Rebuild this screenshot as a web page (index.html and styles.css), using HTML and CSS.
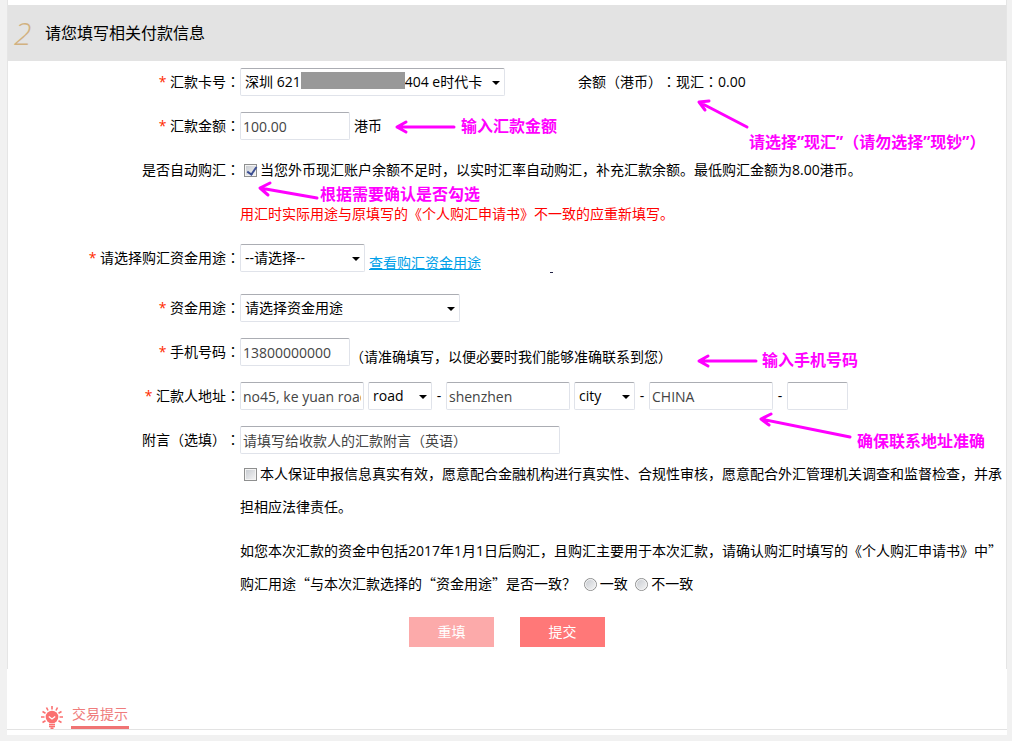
FILE: index.html
```html
<!DOCTYPE html>
<html lang="zh-CN">
<head>
<meta charset="utf-8">
<title>请您填写相关付款信息</title>
<link rel="stylesheet" href="styles.css">
</head>
<body>
<main class="page">
  <section class="panel">
    <header class="step">
      <span class="step-number">2</span>
      <h1 class="step-title">请您填写相关付款信息</h1>
    </header>
    <form class="form">
      <div class="row">
        <label class="label" for="card"><span class="star">*</span> 汇款卡号<span class="colon" lang="zh-TW">：</span></label>
        <div class="field">
          <span class="select card"><select id="card"><option>深圳 621&#8199;&#8199;&#8199;&#8199;&#8199;&#8199;&#8199;&#8199;&#8199;&#8199;&#8199;&#8199;&#8199;404 e时代卡</option></select><span class="mask"></span></span>
          <span class="balance">余额（港币）<span class="colon" lang="zh-TW">：</span>现汇<span class="colon" lang="zh-TW">：</span>0.00</span>
        </div>
      </div>
      <div class="row">
        <label class="label" for="amount"><span class="star">*</span> 汇款金额<span class="colon" lang="zh-TW">：</span></label>
        <div class="field"><input class="text w-short" id="amount" type="text" value="100.00"><span>港币</span></div>
      </div>
      <div class="row">
        <label class="label" for="auto">是否自动购汇<span class="colon" lang="zh-TW">：</span></label>
        <div class="field"><label><input class="check" id="auto" type="checkbox" checked>当您外币现汇账户余额不足时，以实时汇率自动购汇，补充汇款余额。最低购汇金额为8.00港币。</label></div>
      </div>
      <div class="row">
        <span></span>
        <div class="field warning">用汇时实际用途与原填写的《个人购汇申请书》不一致的应重新填写。</div>
      </div>
      <div class="row">
        <label class="label" for="fx-use"><span class="star">*</span> 请选择购汇资金用途<span class="colon" lang="zh-TW">：</span></label>
        <div class="field"><span class="select w-use"><select id="fx-use"><option>--请选择--</option></select></span><a class="link low" href="#">查看购汇资金用途</a></div>
      </div>
      <div class="row row-spaced">
        <label class="label" for="use"><span class="star">*</span> 资金用途<span class="colon" lang="zh-TW">：</span></label>
        <div class="field"><span class="select w-fund"><select id="use"><option>请选择资金用途</option></select></span></div>
      </div>
      <div class="row">
        <label class="label" for="phone"><span class="star">*</span> 手机号码<span class="colon" lang="zh-TW">：</span></label>
        <div class="field field-tight"><input class="text w-short" id="phone" type="text" value="13800000000"><span class="low">（请准确填写，以便必要时我们能够准确联系到您）</span></div>
      </div>
      <div class="row">
        <label class="label" for="street"><span class="star">*</span> 汇款人地址<span class="colon" lang="zh-TW">：</span></label>
        <div class="field">
          <input class="text w-address" id="street" type="text" value="no45, ke yuan road">
          <span class="select w-road"><select aria-label="road"><option>road</option></select></span>
          <span class="dash">-</span>
          <input class="text w-address" type="text" aria-label="city" value="shenzhen">
          <span class="select w-city"><select aria-label="city"><option>city</option></select></span>
          <span class="dash">-</span>
          <input class="text w-address" type="text" aria-label="country" value="CHINA">
          <span class="dash">-</span>
          <input class="text w-zip" type="text" aria-label="zip">
        </div>
      </div>
      <div class="row row-last">
        <label class="label" for="memo">附言（选填）<span class="colon" lang="zh-TW">：</span></label>
        <div class="field"><input class="text w-memo" id="memo" type="text" value="请填写给收款人的汇款附言（英语）"></div>
      </div>
      <div class="terms">
        <p class="para"><label><input class="check" type="checkbox">本人保证申报信息真实有效，愿意配合金融机构进行真实性、合规性审核，愿意配合外汇管理机关调查和监督检查，并承担相应法律责任。</label></p>
        <p class="para">如您本次汇款的资金中包括2017年1月1日后购汇，且购汇主要用于本次汇款，请确认购汇时填写的《个人购汇申请书》中<span class="quote">”</span>购汇用途<span class="quote">“</span>与本次汇款选择的<span class="quote">“</span>资金用途<span class="quote">”</span>是否一致？ <label><input class="radio" type="radio" name="same">一致</label> <label><input class="radio" type="radio" name="same">不一致</label></p>
      </div>
      <div class="actions">
        <button class="btn btn-reset" type="reset">重填</button>
        <button class="btn" type="submit">提交</button>
      </div>
      <svg class="arrows" viewBox="8 61 1000 400" width="1000" height="400" aria-hidden="true">
        <g fill="none" stroke="#ff00ff" stroke-width="3" stroke-linecap="round" stroke-linejoin="round">
          <path d="M454 127H397M406 122L397 127L406 132"/>
          <path d="M747 127L699 102M709 101L699 102L705 110"/>
          <path d="M317 198L260 188M270 183L260 188L268 195"/>
          <path d="M756 361H699M708 356L699 361L708 366"/>
          <path d="M850 437L761 419M771 414L761 419L769 425"/>
        </g>
        <path d="M550 272.500H553" stroke="#222244"/>
      </svg>
      <span class="note note-amount">输入汇款金额</span>
      <span class="note note-balance">请选择”现汇”（请勿选择”现钞”）</span>
      <span class="note note-auto">根据需要确认是否勾选</span>
      <span class="note note-phone">输入手机号码</span>
      <span class="note note-address">确保联系地址准确</span>
    </form>
  </section>
  <footer class="tips">
    <div class="tips-head">
      <svg class="bulb" viewBox="0 0 22 23" width="22" height="23" aria-hidden="true">
        <g stroke="#fb7070" stroke-width="1.600" fill="none">
          <path d="M11 0V3.500M5.500 1.500L7 4.500M16.500 1.500L15 4.500M1.500 5.500L4.500 7.200M20.500 5.500L17.500 7.200M0 11H3.500M22 11H18.500M1.500 16.500L4.500 14.800M20.500 16.500L17.500 14.800"/>
        </g>
        <circle cx="11" cy="11" r="6.300" fill="#fb7070"/>
        <path d="M7.800 10.500L11 13L14.200 10.500" fill="none" stroke="#fff" stroke-width="1.300"/>
        <path d="M8 18.500H14M8 20.500H14M9.500 22.200H12.500" stroke="#fb7070" stroke-width="1.400"/>
      </svg>
      <h2 class="tips-title">交易提示</h2>
    </div>
  </footer>
</main>
</body>
</html>
```
FILE: styles.css
```css
* { box-sizing: border-box; }

body {
  margin: 0;
  background: #f1f1f1;
  color: #000;
  font: 14px/20px "Open Sans", "Noto Sans CJK SC", sans-serif;
  text-spacing-trim: space-all;
}

input, select, button { margin: 0; font: inherit; color: inherit; }

.page { padding: 0 5px 6px 7px; }

.panel {
  padding: 5px 0 22px;
  border: solid #e5e5e5;
  border-width: 0 1px;
  background: #fff;
}

.step {
  display: flex;
  align-items: center;
  gap: 11px;
  height: 56px;
  padding-left: 6px;
  background: #e3e3e3;
}

.step-number {
  width: 20px;
  color: #d2b17f;
  font: italic 300 32px/40px "Open Sans", sans-serif;
}

.step-title { margin: 0; font-size: 16px; font-weight: 400; }

.form { position: relative; }

.row {
  display: grid;
  grid-template-columns: 232px 1fr;
  align-items: center;
  padding: 8px 0;
}

.row-spaced { padding-top: 14px; }
.row-last { padding-bottom: 3px; }
.row:first-child { padding-top: 7px; }

.label { text-align: right; }
.star { color: #ff2a00; }
.colon { font-family: "Noto Sans CJK TC", sans-serif; line-height: 1; }
.quote { font-family: "Noto Sans CJK SC", sans-serif; line-height: 1; }

.field {
  display: flex;
  align-items: center;
  gap: 4px;
  height: 28px;
  white-space: nowrap;
}

.field-tight { gap: 0; }

.text, .select select {
  height: 28px;
  border: 1px solid #e0e3ea;
  border-top-color: #abadb3;
  border-radius: 2px;
  background: #fff;
}

.text { padding: 0 2px; color: #444; }

.select { position: relative; display: inline-flex; }
.select select { width: 100%; padding: 0 4px; appearance: none; }

.select::after {
  content: "";
  position: absolute;
  top: 13px;
  right: 5px;
  border: 4px solid transparent;
  border-top-color: #000;
  border-bottom: 0;
}

.card { width: 265px; }

.mask {
  position: absolute;
  top: 4px;
  left: 61px;
  width: 104px;
  height: 17px;
  background: #999;
}

.balance { margin-left: 69px; }
.w-short { width: 110px; }
.w-use { width: 125px; }
.w-fund { width: 220px; }
.w-address { width: 124px; }
.w-road { width: 64px; }
.w-city { width: 61px; }
.w-zip { width: 61px; }
.w-memo { width: 320px; }
.dash { width: 6px; text-align: center; }

.low { padding-top: 9px; }
.link { color: #009fe8; }
.warning { color: #f00; }

.check, .radio {
  position: relative;
  width: 13px;
  height: 13px;
  border: 1px solid #8e8f8f;
  outline: 1px solid #f4f4f4;
  outline-offset: -2px;
  background: linear-gradient(135deg, #c5c9cf, #f6f6f6);
  appearance: none;
  vertical-align: -2px;
}

.check { margin: 0 3px 0 4px; }

.check:checked::after {
  content: "";
  position: absolute;
  top: 0;
  left: 4px;
  width: 4px;
  height: 8px;
  border: solid #3c4f93;
  border-width: 0 2px 2px 0;
  transform: rotate(35deg);
}

.radio { margin: 0 3px 0 4px; border-radius: 50%; }

.terms { padding: 0 2px 0 232px; line-height: 33px; }
.para { margin: 0 0 11px; }

.actions {
  display: flex;
  justify-content: center;
  gap: 26px;
  padding: 6px 0 0;
}

.btn {
  width: 85px;
  height: 30px;
  padding: 0;
  border: 0;
  background: #ff7878;
  color: #fff;
}

.btn-reset { background: #fcaaaa; }

.arrows { position: absolute; top: 0; left: 0; pointer-events: none; }

.note {
  position: absolute;
  color: #f0f;
  font-size: 16px;
  font-weight: 700;
  line-height: 20px;
  white-space: nowrap;
}

.note-amount { top: 55px; left: 453px; }
.note-balance { top: 71px; left: 741px; }
.note-auto { top: 123px; left: 312px; }
.note-phone { top: 289px; left: 754px; }
.note-address { top: 370px; left: 849px; }

.tips { padding: 33px 0 5px; background: #fff; }

.tips-head {
  display: flex;
  align-items: flex-end;
  gap: 8px;
  padding-left: 34px;
  border-bottom: 1px solid #e3e3e3;
}

.bulb { display: block; }

.tips-title {
  margin: 0;
  padding: 0 1px;
  border-bottom: 3px solid #f07474;
  color: #ef7c7c;
  font-size: 14px;
  font-weight: 400;
  line-height: 24px;
}
```
